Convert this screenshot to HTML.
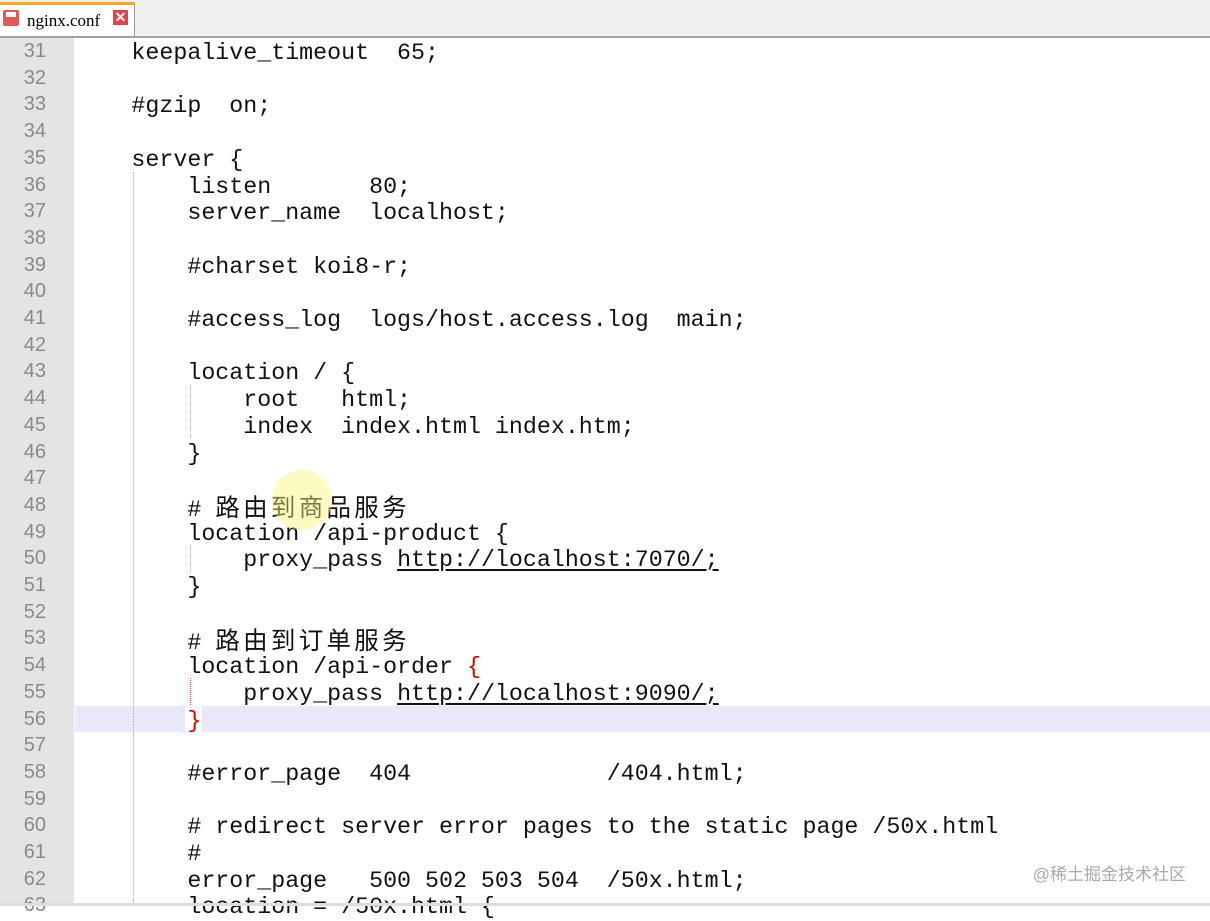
<!DOCTYPE html>
<html><head><meta charset="utf-8"><style>
body{margin:0;width:1210px;height:906px;overflow:hidden;background:#fff;position:relative;font-family:"Liberation Mono","Noto Sans CJK SC",monospace;}
#tabbar{position:absolute;left:0;top:0;width:1210px;height:36px;background:#f0f0f0;border-bottom:2px solid #a0a0a0;}
#tab{position:absolute;left:0;top:2px;width:135px;height:34px;background:#fff;border-top:3px solid #f5a623;border-right:1px solid #999;box-sizing:border-box;}
#tab .t{position:absolute;left:27px;top:6px;font-family:"Liberation Serif",serif;font-size:17px;color:#000;}
#gutter{position:absolute;left:0;top:38px;width:74px;height:868px;background:#e4e4e4;}
.ln{position:absolute;left:0;width:46px;text-align:right;color:#8a8a8a;font-family:"Liberation Sans",sans-serif;font-size:20px;height:26.7px;line-height:26.7px;}
.cl{position:absolute;left:75.5px;white-space:pre;font-size:23.3px;height:26.7px;line-height:26.7px;color:#111;}
.cj{font-family:"Noto Sans CJK SC",sans-serif;font-size:24.5px;letter-spacing:3.3px}
u{text-decoration:underline;text-underline-offset:3px}
.g{position:absolute;border-left:1px dotted #aaa;width:0}
</style></head><body>
<div id="tabbar"><div id="tab">
<div style="position:absolute;left:3px;top:5px;width:16px;height:16px;background:#e05a5a;border-radius:2px"><div style="position:absolute;left:3px;top:2px;width:10px;height:5px;background:#fff"></div></div>
<span class="t">nginx.conf</span>
<div style="position:absolute;left:113px;top:5px;width:15px;height:15px;background:#d44;color:#fff;font:bold 14px/15px 'Liberation Sans';text-align:center">✕</div>
</div></div>
<div id="gutter"></div>
<div style="position:absolute;left:75px;top:706px;width:110px;height:26px;background:#e8e8f8"></div>
<div style="position:absolute;left:202px;top:706px;width:1008px;height:26px;background:#e8e8f8"></div>
<div class="g" style="left:133px;top:172px;height:734px"></div>
<div class="g" style="left:190px;top:385px;height:53px"></div>
<div class="g" style="left:190px;top:545px;height:27px"></div>
<div class="g" style="left:190px;top:678px;height:27px;border-left-color:#d55"></div>
<div id="lines"></div>
<div style="position:absolute;left:0;top:903px;width:1210px;height:3px;background:#ddd"></div>
<div style="position:absolute;right:24px;top:860px;font-family:'Liberation Sans','Noto Sans CJK SC',sans-serif;font-size:17px;color:#aaa">@稀土掘金技术社区</div>
<script>
var L=["    keepalive_timeout  65;","","    #gzip  on;","","    server {","        listen       80;","        server_name  localhost;","","        #charset koi8-r;","","        #access_log  logs/host.access.log  main;","","        location / {","            root   html;","            index  index.html index.htm;","        }","","        # <span class=cj>路由到商品服务</span>","        location /api-product {","            proxy_pass <u>http://localhost:7070/;</u>","        }","","        # <span class=cj>路由到订单服务</span>","        location /api-order <span style='color:#d00'>{</span>","            proxy_pass <u>http://localhost:9090/;</u>","        <span style='color:#d00'>}</span>","","        #error_page  404              /404.html;","","        # redirect server error pages to the static page /50x.html","        #","        error_page   500 502 503 504  /50x.html;","        location = /50x.html {"];
var h="";for(var i=0;i<L.length;i++){var t=38+i*26.7;h+="<div class=ln style='top:"+t+"px'>"+(31+i)+"</div><div class=cl style='top:"+(t+2)+"px'>"+L[i]+"</div>";}
document.getElementById("lines").innerHTML=h;
</script>
<div style="position:absolute;left:272px;top:470px;width:60px;height:60px;border-radius:50%;background:rgba(250,245,120,0.45)"></div>
</body></html>
